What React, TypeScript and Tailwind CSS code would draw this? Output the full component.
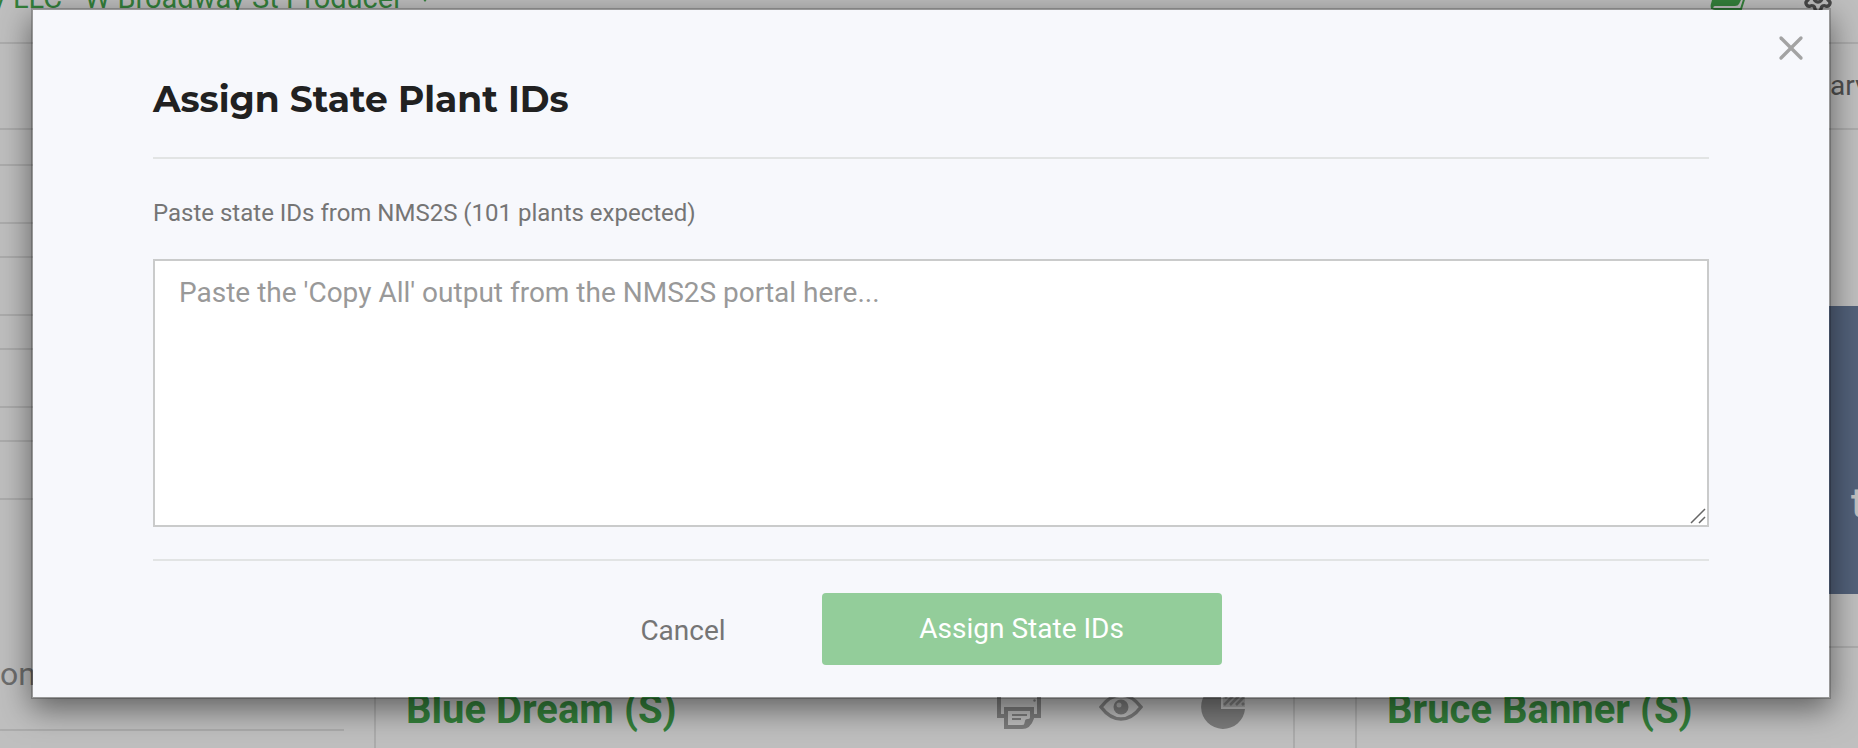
import { X, Settings } from "lucide-react";

const sans = "font-['Roboto','Liberation_Sans',sans-serif]";

function PrinterIcon() {
  return (
    <svg viewBox="0 0 44 44" className="h-11 w-11" fill="none" stroke="#7d7d7d" strokeWidth="4" aria-hidden="true">
      <path d="M9 31H2V8H42V31H35" />
      <path d="M9 24H35V33Q32 42 25 42H9Z" />
      <path d="M15 30H30M15 34H24" strokeWidth="2" />
      <path d="M36 34Q28 33 28 36L26 43Q34 42 36 34Z" fill="#7d7d7d" stroke="none" />
      <circle cx="37.500" cy="15.500" r="1.200" fill="#7d7d7d" stroke="none" />
    </svg>
  );
}

function EyeIcon() {
  return (
    <svg viewBox="0 0 44 44" className="h-11 w-11" fill="none" aria-hidden="true">
      <path d="M2 22C8 14 14 10 22 10S36 14 42 22C36 30 30 34 22 34S8 30 2 22Z" stroke="#7d7d7d" strokeWidth="3.5" />
      <circle cx="22" cy="22" r="7.500" fill="#7d7d7d" />
      <circle cx="20" cy="20" r="2.500" fill="#b0b0b0" />
    </svg>
  );
}

function PieIcon() {
  return (
    <svg viewBox="0 0 44 44" className="h-11 w-11" aria-hidden="true">
      <path d="M20 0A22 22 0 1 0 44 24H20Z" fill="#7d7d7d" />
      <path d="M22 0H44V22H22Z" fill="#a8a8a8" />
      <path d="M23 20L38 5M29 20L41 8M35 20L43 12M24 13L34 3M41 20L43 18" stroke="#7d7d7d" strokeWidth="2.500" />
    </svg>
  );
}

function CardsIcon() {
  return (
    <svg viewBox="0 0 36 12" className="h-3 w-9" fill="none" aria-hidden="true">
      <path d="M2 0H31L29 4Q28 6 25 6H5Q3 6 3 9H1Q0 5 2 0Z" fill="#34813b" />
      <path d="M2 5Q1 9 5 9H31L34.500 -2" stroke="#34813b" strokeWidth="2" />
    </svg>
  );
}

function ResizeGrip() {
  return (
    <svg
      viewBox="0 0 16 16"
      className="pointer-events-none absolute right-[3px] bottom-[3px] h-4 w-4"
      stroke="#666"
      strokeWidth="1.500"
      aria-hidden="true"
    >
      <path d="M1 15L15 1M9 15L15 9" />
    </svg>
  );
}

function Page() {
  return (
    <div className="absolute inset-0 flex flex-col overflow-hidden bg-[#bfbfbf]" aria-hidden="true">
      <header className="flex h-11 shrink-0 items-start justify-between border-b-2 border-[#acacac] pr-6">
        <p className="-mt-5 -ml-2 flex items-start gap-4 text-[29px] leading-9 whitespace-nowrap text-[#34813b]">
          y LLC - W Broadway St Producer
          <svg viewBox="0 0 12 8" className="mt-3.5 h-2 w-3" fill="#34813b">
            <path d="M0 0H12L6 8Z" />
          </svg>
        </p>
        <div className="flex gap-14">
          <CardsIcon />
          <Settings className="-mt-[18px] h-8 w-8" strokeWidth={2.5} color="#484848" />
        </div>
      </header>
      <div className="flex h-[86px] shrink-0 items-center justify-end overflow-hidden border-b-2 border-[#acacac]">
        <span className="w-7 text-[28px] leading-8 text-[#505050]">arvest</span>
      </div>
      <div className="flex h-[518px] shrink-0 justify-between">
        <div className="flex w-[344px] flex-col pt-0.5">
          {[0, 1, 2, 3].map((row) => (
            <div key={row} className="flex h-[92px] flex-col justify-end border-b-2 border-[#acacac] pb-14">
              <div className="border-b-2 border-[#acacac]" />
            </div>
          ))}
        </div>
        <div className="flex w-16 flex-col border-b-2 border-[#acacac] pt-[176px]">
          <div className="h-[288px] overflow-hidden bg-[#52617a] pt-[173px] pl-[57px] text-[40px] leading-[50px] font-medium text-[#c0c0c0]">t</div>
        </div>
      </div>
      <div className="flex min-h-0 flex-1">
        <div className="flex w-[374px] flex-col pt-1.5">
          <p className="w-[344px] border-b-2 border-[#acacac] pb-[35px] text-[32px] leading-10 text-[#6e6e6e]">on</p>
        </div>
        <section className="flex w-[921px] items-start justify-between border-x-2 border-[#acacac] px-[30px] pr-12 pt-[37px]">
          <h2 className="text-[40px] leading-[50px] font-bold text-[#34813b]">Blue Dream (S)</h2>
          <div className="flex gap-[58px]">
            <PrinterIcon />
            <EyeIcon />
            <PieIcon />
          </div>
        </section>
        <section className="ml-15 flex-1 border-l-2 border-[#acacac] px-[30px] pt-[37px]">
          <h2 className="text-[40px] leading-[50px] font-bold text-[#34813b]">Bruce Banner (S)</h2>
        </section>
      </div>
    </div>
  );
}

export default function App() {
  return (
    <div className={`relative h-screen overflow-hidden ${sans}`}>
      <Page />
      <div className="relative pt-2 pr-[27px] pl-[31px]">
        <div
          role="dialog"
          aria-modal="true"
          aria-labelledby="dialog-title"
          className="relative border-2 border-black/20 bg-[#f7f8fc] bg-clip-padding px-[120px] pt-16 pb-8 shadow-[0_10px_30px_rgba(0,0,0,0.5)]"
        >
          <button type="button" aria-label="Close" className="absolute top-[18px] right-[18px] text-[#a3a3a3]">
            <X className="h-10 w-10" strokeWidth={2} />
          </button>
          <h1 id="dialog-title" className="border-b-2 border-[#e2e4e4] pt-1 pb-9 font-['Montserrat','Inter',sans-serif] text-[36px] leading-[43px] font-bold text-[#212121]">
            Assign State Plant IDs
          </h1>
          <label htmlFor="state-ids" className="mt-9 block text-2xl leading-9 text-[#757575]">
            Paste state IDs from NMS2S (101 plants expected)
          </label>
          <div className="relative mt-7">
            <textarea
              id="state-ids"
              placeholder="Paste the 'Copy All' output from the NMS2S portal here..."
              className="block h-[268px] w-full resize-none border-2 border-[#cacbcb] bg-white px-6 py-3 text-[28px] leading-10 text-[#484848] placeholder:text-[#999]"
            />
            <ResizeGrip />
          </div>
          <div className="mt-8 flex items-center justify-center gap-24 border-t-2 border-[#e2e4e4] pt-8">
            <button type="button" className="pt-1 text-[28px] leading-10 text-[#757575]">
              Cancel
            </button>
            <button type="button" className="h-[72px] w-[400px] rounded bg-[#93cd9a] text-[28px] leading-10 text-white">
              Assign State IDs
            </button>
          </div>
        </div>
      </div>
    </div>
  );
}
